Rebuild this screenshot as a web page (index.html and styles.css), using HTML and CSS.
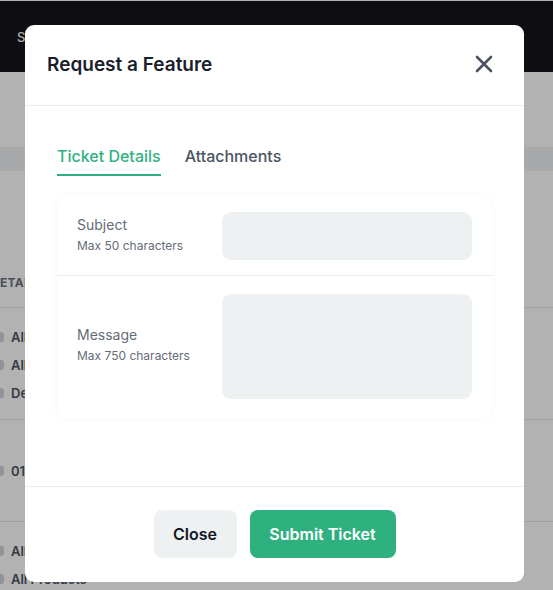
FILE: index.html
```html
<!DOCTYPE html>
<html lang="en">
<head>
<meta charset="utf-8">
<title>Request a Feature</title>
<link rel="stylesheet" href="styles.css">
</head>
<body>
<div class="page">
  <header class="topbar"><span class="brand">Settings</span></header>
  <div class="subbar"></div>
  <div class="band"></div>
  <div class="table">
    <div class="thead">DETAILS</div>
    <div class="trow r1">
      <div class="item"><i class="chip"></i>All Regions</div>
      <div class="item"><i class="chip"></i>All Channels</div>
      <div class="item"><i class="chip"></i>Default</div>
    </div>
    <div class="trow r2">
      <div class="item"><i class="chip"></i>01/01/2024</div>
    </div>
    <div class="trow r3">
      <div class="item"><i class="chip"></i>All Regions</div>
      <div class="item"><i class="chip"></i>All Products</div>
    </div>
  </div>
</div>
<div class="overlay"></div>
<div class="modal">
  <div class="modal-head">
    <h2 class="modal-title">Request a Feature</h2>
    <svg class="close-x" width="18" height="18" viewBox="0 0 18 18"><path d="M2 2L16 16M16 2L2 16" stroke="#4b5360" stroke-width="2.6" stroke-linecap="round"/></svg>
  </div>
  <div class="modal-body">
    <div class="tabs">
      <div class="tab active">Ticket Details</div>
      <div class="tab">Attachments</div>
    </div>
    <div class="card">
      <div class="field f1">
        <div class="label"><div class="lt">Subject</div><div class="ls">Max 50 characters</div></div>
        <div class="input small"></div>
      </div>
      <div class="field f2">
        <div class="label"><div class="lt">Message</div><div class="ls">Max 750 characters</div></div>
        <div class="input big"></div>
      </div>
    </div>
  </div>
  <div class="modal-foot">
    <button class="btn btn-close">Close</button>
    <button class="btn btn-submit">Submit Ticket</button>
  </div>
</div>
</body>
</html>
```

FILE: styles.css
```css
* { box-sizing: border-box; }
html, body { margin: 0; padding: 0; }
body {
  font-family: Inter, "Noto Sans", Arial, sans-serif;
  background: #ffffff;
  width: 553px;
  height: 590px;
  overflow: hidden;
  position: relative;
}
.page { border-top: 1px solid #ffffff; }
.topbar {
  height: 71px;
  background: #14141b;
  display: flex;
  align-items: center;
  padding-left: 17px;
}
.brand { color: #f3f3f3; font-size: 13px; font-weight: 500; }
.subbar { height: 75px; background: #ffffff; }
.band { height: 24px; background: #f1f3f5; }
.table { margin-left: -9px; }
.thead {
  height: 137px;
  display: flex;
  align-items: center;
  padding-top: 86px;
  font-size: 12px;
  font-weight: 700;
  color: #6b7280;
  letter-spacing: 0.3px;
  border-bottom: 1px solid #e5e7eb;
}
.trow {
  border-bottom: 1px solid #e5e7eb;
  display: flex;
  flex-direction: column;
  gap: 9px;
}
.r1 { padding: 19px 0 0; height: 112px; }
.r2 { height: 102px; justify-content: center; }
.r3 { padding: 19px 0 0; height: 80px; }
.item {
  display: flex;
  align-items: center;
  gap: 7px;
  font-size: 13px;
  font-weight: 600;
  color: #4b5563;
  height: 19px;
  padding-left: 5px;
}
.chip {
  width: 8px; height: 10px;
  border-radius: 3px;
  background: #cfd3d8;
}
.overlay {
  position: absolute;
  inset: 0;
  background: rgba(0, 0, 0, 0.3);
}
.modal {
  position: absolute;
  top: 25px;
  left: 25px;
  width: 499px;
  background: #ffffff;
  border-radius: 9px;
  display: flex;
  flex-direction: column;
}
.modal-head {
  height: 81px;
  padding: 0 31px 0 22px;
  display: flex;
  align-items: center;
  justify-content: space-between;
  border-bottom: 1px solid #eceef1;
}
.modal-title {
  margin: 0;
  font-size: 19px;
  font-weight: 600;
  color: #1b1e2b;
  padding-bottom: 2px;
}
.close-x { margin-top: -2px; }
.modal-body { padding: 38px 32px 67px; }
.tabs { display: flex; gap: 24px; }
.tab {
  font-size: 16px;
  font-weight: 500;
  line-height: 24px;
  color: #4b5563;
  padding-bottom: 6px;
  border-bottom: 2px solid transparent;
}
.tab.active { color: #2fb17f; border-bottom-color: #2fb17f; }
.card {
  margin-top: 20px;
  border-radius: 12px;
  background: #ffffff;
  box-shadow: 0 0 10px rgba(0, 0, 0, 0.035);
}
.field {
  display: flex;
  align-items: center;
  padding: 16px 20px;
}
.f1 { border-bottom: 1px solid #e9ecef; padding-bottom: 15px; }
.f2 { padding: 18px 20px 20px; }
.label { width: 145px; padding-bottom: 4px; }
.lt { font-size: 14px; line-height: 20px; color: #646b77; }
.ls { font-size: 12px; line-height: 16px; color: #646b77; margin-top: 3px; }
.input { width: 250px; background: #edf1f2; border-radius: 9px; }
.small { height: 48px; }
.big { height: 105px; }
.modal-foot {
  border-top: 1px solid #eceef1;
  padding: 23px 0 24px;
  display: flex;
  justify-content: center;
  gap: 13px;
}
.btn {
  height: 48px;
  border: none;
  border-radius: 8px;
  font-family: inherit;
  font-size: 16px;
  font-weight: 600;
  cursor: pointer;
}
.btn-close { width: 83px; background: #eef1f2; color: #111827; }
.btn-submit { width: 146px; background: #2fb17f; color: #ffffff; }
```
